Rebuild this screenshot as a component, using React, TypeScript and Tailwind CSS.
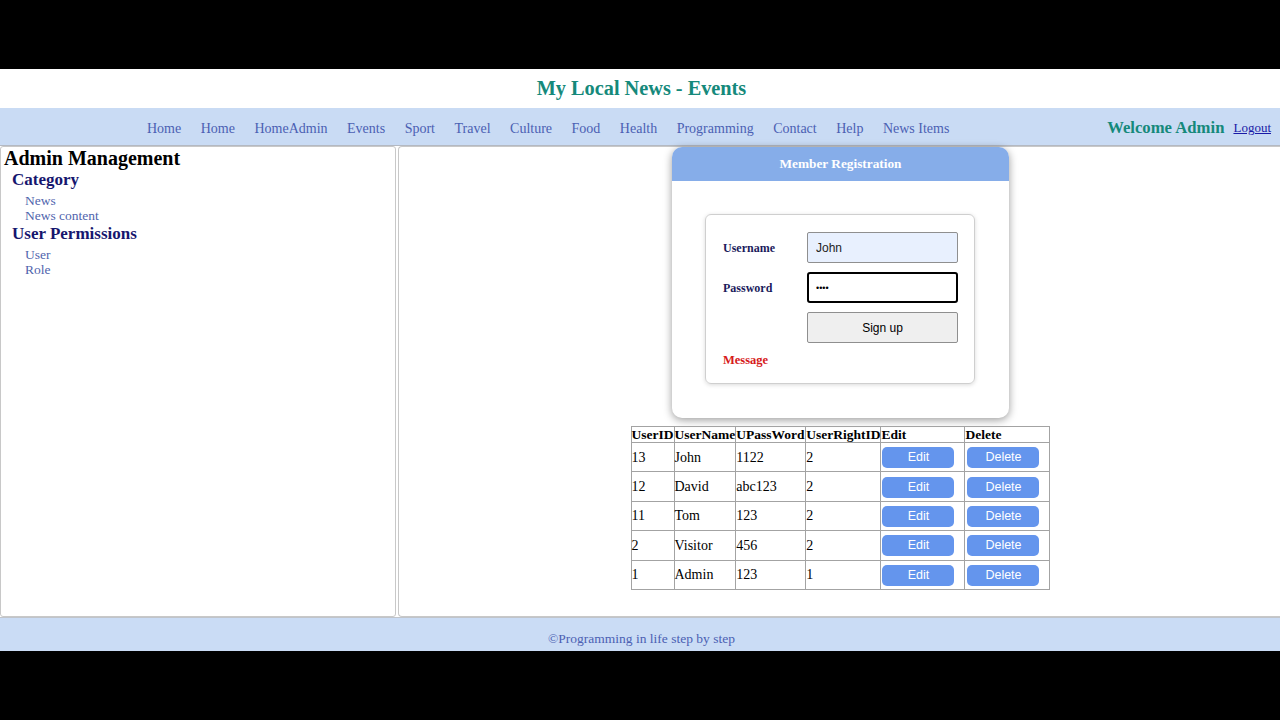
import { useState } from "react";

const navLinks = [
  "Home",
  "Home",
  "HomeAdmin",
  "Events",
  "Sport",
  "Travel",
  "Culture",
  "Food",
  "Health",
  "Programming",
  "Contact",
  "Help",
  "News Items",
];

const users = [
  { id: 13, name: "John", pass: "1122", right: 2 },
  { id: 12, name: "David", pass: "abc123", right: 2 },
  { id: 11, name: "Tom", pass: "123", right: 2 },
  { id: 2, name: "Visitor", pass: "456", right: 2 },
  { id: 1, name: "Admin", pass: "123", right: 1 },
];

const serif = "font-['Liberation_Serif','Times_New_Roman',serif]";
const sans = "font-['Liberation_Sans',Arial,sans-serif]";

const App = () => {
  const [username, setUsername] = useState("John");
  const [password, setPassword] = useState("1234");

  return (
    <div className={`w-[1280px] h-[720px] bg-black flex flex-col ${serif}`}>
      <div className="h-[69px]" />

      <div className="h-[582px] bg-white flex flex-col">
        {/* Header */}
        <div className="h-[39px] flex items-center justify-center pl-[3px]">
          <h1 className="text-[20.3px] font-bold text-[#15897b] leading-none">
            My Local News - Events
          </h1>
        </div>

        {/* Nav */}
        <div className="h-[38px] bg-[#c9dbf4] border-b border-[#b4b9c2] flex items-center pt-[3px]">
          <ul className="flex items-center gap-[19.5px] pl-[147px] text-[14px] text-[#4b60b3]">
            {navLinks.map((link, i) => (
              <li key={i}>
                <a href="#">{link}</a>
              </li>
            ))}
          </ul>
          <div className="ml-auto flex items-center gap-[9px] pr-[9px]">
            <span className="text-[16.7px] font-bold text-[#15897b]">Welcome Admin</span>
            <a href="#" className="text-[13px] text-[#1a1aa6] underline">
              Logout
            </a>
          </div>
        </div>

        {/* Main */}
        <div className="flex-1 flex gap-[2px]">
          <div className="w-[396px] border border-[#c8c8c8] rounded-[3px] pl-[3px]">
            <h2 className="text-[20px] font-bold text-black leading-[23px]">Admin Management</h2>
            <div className="pl-[8px]">
              <h3 className="text-[17px] font-bold text-[#16166e] leading-[20px]">Category</h3>
              <ul className="pl-[13px] pt-[3px] text-[13.5px] text-[#5064ad] leading-[15px]">
                <li>News</li>
                <li>News content</li>
              </ul>
              <h3 className="text-[17px] font-bold text-[#16166e] leading-[20px] pt-[1px]">
                User Permissions
              </h3>
              <ul className="pl-[13px] pt-[3px] text-[13.5px] text-[#5064ad] leading-[15px]">
                <li>User</li>
                <li>Role</li>
              </ul>
            </div>
          </div>

          <div className="flex-1 border border-r-0 border-[#c8c8c8] rounded-l-[4px] flex flex-col items-center pl-[2px]">
            {/* Registration card */}
            <div className="w-[337px] h-[271px] bg-white rounded-[10px] shadow-[0_2px_8px_rgba(0,0,0,0.4)] flex flex-col">
              <div className="h-[34px] bg-[#86ade9] rounded-t-[10px] flex items-center justify-center">
                <span className="text-[13.3px] font-bold text-white">Member Registration</span>
              </div>
              <div className="flex-1 pt-[33px] pl-[33px]">
                <div className="w-[270px] h-[170px] border border-[#cfcfcf] rounded-[6px] shadow-[0_1px_4px_rgba(0,0,0,0.15)] pt-[17px] pl-[17px] flex flex-col gap-[9px]">
                  <div className="flex items-center">
                    <label className="w-[84px] text-[12px] font-bold text-[#1b1b5c]">Username</label>
                    <input
                      value={username}
                      onChange={(e) => setUsername(e.target.value)}
                      className={`w-[151px] h-[31px] bg-[#e8f0fe] border border-[#8f8f8f] rounded-[2px] px-[8px] text-[12px] text-[#222] outline-none ${sans}`}
                    />
                  </div>
                  <div className="flex items-center">
                    <label className="w-[84px] text-[12px] font-bold text-[#1b1b5c]">Password</label>
                    <input
                      type="password"
                      value={password}
                      onChange={(e) => setPassword(e.target.value)}
                      className={`w-[151px] h-[31px] bg-white border-2 border-black rounded-[3px] px-[7px] text-[9px] outline-none ${sans}`}
                    />
                  </div>
                  <div className="flex items-center">
                    <div className="w-[84px]" />
                    <button
                      className={`w-[151px] h-[31px] bg-[#efefef] border border-[#8f8f8f] rounded-[2px] text-[12px] text-black ${sans}`}
                    >
                      Sign up
                    </button>
                  </div>
                  <p className="text-[12.5px] font-bold text-[#d61a1a] leading-[15px] pt-[1px]">Message</p>
                </div>
              </div>
            </div>

            {/* Users table */}
            <table className="mt-[8px] border-collapse text-[13.5px] text-black">
              <thead>
                <tr className="h-[16px] leading-[14px]">
                  <th className="w-[42px] border border-[#a3a3a3] text-left font-bold p-0">UserID</th>
                  <th className="w-[61px] border border-[#a3a3a3] text-left font-bold p-0">UserName</th>
                  <th className="w-[70px] border border-[#a3a3a3] text-left font-bold p-0">UPassWord</th>
                  <th className="w-[75px] border border-[#a3a3a3] text-left font-bold p-0">UserRightID</th>
                  <th className="w-[84px] border border-[#a3a3a3] text-left font-bold p-0">Edit</th>
                  <th className="w-[85px] border border-[#a3a3a3] text-left font-bold p-0">Delete</th>
                </tr>
              </thead>
              <tbody className="text-[14px]">
                {users.map((u) => (
                  <tr key={u.id} className="h-[29.4px]">
                    <td className="border border-[#a3a3a3] p-0">{u.id}</td>
                    <td className="border border-[#a3a3a3] p-0">{u.name}</td>
                    <td className="border border-[#a3a3a3] p-0">{u.pass}</td>
                    <td className="border border-[#a3a3a3] p-0">{u.right}</td>
                    <td className="border border-[#a3a3a3] p-0 pl-[1px]">
                      <button
                        className={`w-[72px] h-[21px] bg-[#6495ed] rounded-[5px] text-white text-[12.5px] ${sans}`}
                      >
                        Edit
                      </button>
                    </td>
                    <td className="border border-[#a3a3a3] p-0 pl-[2px]">
                      <button
                        className={`w-[72px] h-[21px] bg-[#6495ed] rounded-[5px] text-white text-[12.5px] ${sans}`}
                      >
                        Delete
                      </button>
                    </td>
                  </tr>
                ))}
              </tbody>
            </table>
          </div>
        </div>

        {/* Footer */}
        <div className="h-[34px] bg-[#cadcf5] border-t border-[#c0c4ca] flex items-center justify-center">
          <span className="text-[13.5px] text-[#4b60b3] pt-[9px] pl-[3px]">©Programming in life step by step</span>
        </div>
      </div>

      <div className="h-[69px]" />
    </div>
  );
};

export default App;
